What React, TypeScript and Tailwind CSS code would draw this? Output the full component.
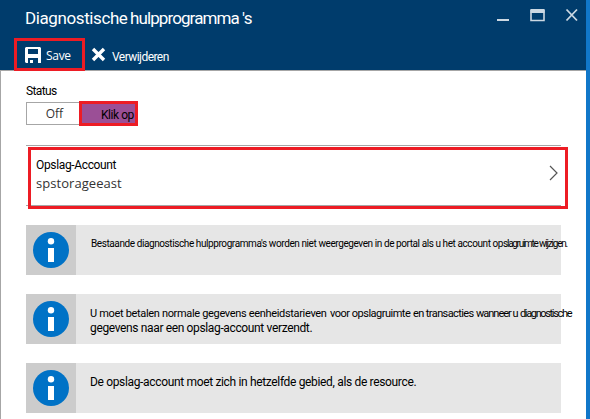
import type { ReactNode } from 'react';

function InfoIcon() {
  return (
    <svg width="36" height="36" viewBox="0 0 36 36" aria-hidden="true">
      <circle cx="18" cy="18" r="18" fill="#0072c6" />
      <circle cx="18" cy="9.3" r="3.2" fill="#fff" />
      <rect x="15" y="16" width="6" height="14" fill="#fff" />
    </svg>
  );
}

function Notice({ children }: { children: ReactNode }) {
  return (
    <section className="flex h-[50px] w-[535px] bg-[#e6e6e6]">
      <div className="flex w-[50px] shrink-0 items-center justify-center bg-[#ccc]">
        <InfoIcon />
      </div>
      <div className="w-0 grow whitespace-nowrap text-black">{children}</div>
    </section>
  );
}

function WindowControls() {
  return (
    <svg className="mt-2 mr-[7px]" width="84" height="15" viewBox="0 0 84 15" fill="none" aria-hidden="true">
      <path d="M2 12H14" stroke="#ccd8e2" strokeWidth="2" />
      <path d="M36 2.5H49V12.5H36Z" stroke="#ccd8e2" strokeWidth="1.6" />
      <path d="M35.5 3H49.5" stroke="#ccd8e2" strokeWidth="4" />
      <path d="M71.5 1.5L82 12.5M82 1.5L71.5 12.5" stroke="#ccd8e2" strokeWidth="1.8" />
    </svg>
  );
}

export default function App() {
  return (
    <div className="flex h-[419px] w-[590px] overflow-hidden bg-white font-[Roboto,'Liberation_Sans',sans-serif] text-black">
      <div className="flex w-[586px] shrink-0 flex-col">
        <header className="h-[71px] border-b border-[#a6a6a6] bg-[#003c6c] text-white">
          <div className="flex h-[38px] items-start justify-between">
            <h1 className="flex pt-[7px] pl-[25px] text-[17px] leading-[22px] whitespace-pre">
              <span className="w-[105px] tracking-[-0.4px]">Diagnostische</span>
              <span className="w-[112px] tracking-[-0.9px]">hulpprogramma</span>
              <span className="tracking-[-0.6px]">'s</span>
            </h1>
            <WindowControls />
          </div>
          <div className="flex h-[33px] pl-[14px]">
            <button className="flex h-[33px] w-[71px] border-3 border-[#ed1c24] pt-[6px] pl-[8px]">
              <svg width="16" height="16" viewBox="0 0 16 16" aria-hidden="true">
                <path fillRule="evenodd" fill="#fff" d="M1 0H15L16 1V16H13V11H3V16H1L0 15V1ZM3 2V7H13V2ZM5 13H8V16H5Z" />
              </svg>
              <span className="ml-[5px] font-['Open_Sans',sans-serif] text-[12px] leading-[18px] tracking-[-0.3px]">Save</span>
            </button>
            <button className="flex pt-[9px] pl-[6px]">
              <svg width="15" height="15" viewBox="0 0 15 15" fill="none" aria-hidden="true">
                <path d="M2 2L13 13M13 2L2 13" stroke="#fff" strokeWidth="3.4" />
              </svg>
              <span className="ml-[6px] pt-px text-[12px] leading-[18px] tracking-[-0.55px]">Verwijderen</span>
            </button>
          </div>
        </header>
        <main className="h-[348px] border-l border-[#a6a6a6] pl-[25px]">
          <div className="h-[30px] pt-[12px] text-[12px] leading-[16px] tracking-[-0.6px]">Status</div>
          <div className="flex h-[25px]">
            <button className="mt-px h-[23px] w-[53px] border border-r-0 border-[#a6a6a6] pl-[3px] font-['Open_Sans',sans-serif] text-[12px] leading-[21px] text-[#333]">Off</button>
            <button className="h-[25px] w-[59px] border-3 border-[#ed1c24] bg-[#9b4f96] pt-[3px] pl-[19px] text-left text-[12px] leading-[16px] tracking-[-0.45px] whitespace-nowrap">Klik op</button>
          </div>
          <div className="mt-[19px] h-[61px] w-[535px] border-y border-[#a6a6a6] pt-px pl-[2px]">
            <button className="relative flex h-[62px] w-[540px] items-start justify-between border-3 border-[#ed1c24] pt-[7px] pr-[6px] pl-[5px] text-left">
              <span>
                <span className="block text-[12px] leading-[16px] tracking-[-0.35px]">Opslag-Account</span>
                <span className="block font-['Open_Sans',sans-serif] text-[13px] leading-[21px] tracking-[0.05px] text-[#333]">spstorageeast</span>
              </span>
              <svg className="mt-[8px]" width="10" height="16" viewBox="0 0 10 16" fill="none" aria-hidden="true">
                <path d="M1 1L8 8L1 15" stroke="#555" strokeWidth="1.2" />
              </svg>
            </button>
          </div>
          <div className="mt-[19px] flex flex-col gap-[19px]">
            <Notice>
              <p className="flex pt-[11px] pl-[15px] text-[10px] leading-[16px] whitespace-pre">
                <span className="w-[305px] shrink-0 tracking-[-0.41px]">Bestaande diagnostische hulpprogramma's worden niet weergegeven in de</span>
                <span className="w-[111px] shrink-0 tracking-[-0.42px]">portal als u het account ops</span>
                <span className="w-[32px] shrink-0 tracking-[-1.3px]">lagruimte</span>
                <span className="shrink-0 tracking-[-1.2px]">wijzigen.</span>
              </p>
            </Notice>
            <Notice>
              <p className="flex pt-[12px] pl-[14px] text-[11px] leading-[16px] whitespace-pre">
                <span className="w-[240px] shrink-0 tracking-[-0.33px]">U moet betalen normale gegevens eenheidstarieven</span>
                <span className="w-[83px] shrink-0 tracking-[-0.5px]">voor opslagruimte</span>
                <span className="w-[63px] shrink-0 tracking-[-0.6px]">en transacties</span>
                <span className="w-[44px] shrink-0 tracking-[-1px]">wanneer u</span>
                <span className="shrink-0 tracking-[-1.35px]">diagnostische</span>
              </p>
              <p className="-mt-[2px] pl-[14px] text-[12px] leading-[16px] tracking-[-0.36px]">gegevens naar een opslag-account verzendt.</p>
            </Notice>
            <Notice>
              <p className="pt-[11px] pl-[14px] text-[12px] leading-[16px] tracking-[-0.34px]">De opslag-account moet zich in hetzelfde gebied, als de resource.</p>
            </Notice>
          </div>
        </main>
      </div>
      <div className="w-1 bg-[#1177c9]" />
    </div>
  );
}
